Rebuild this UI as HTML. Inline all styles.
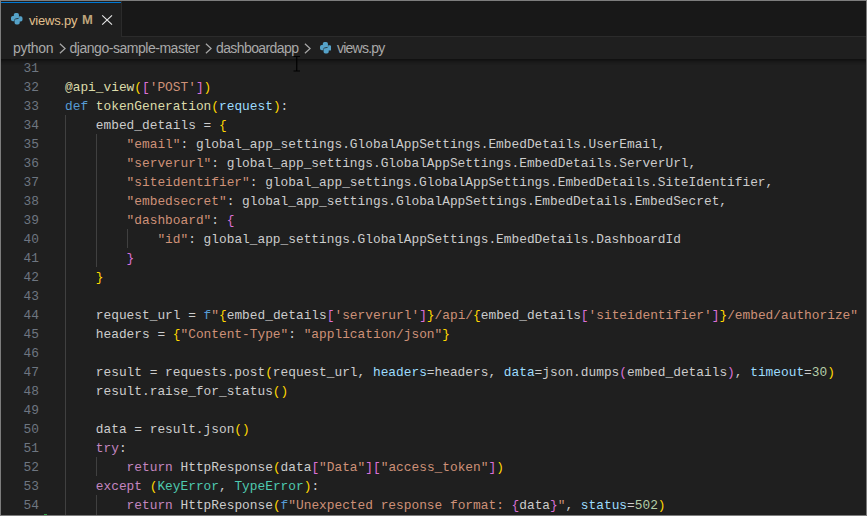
<!DOCTYPE html>
<html><head><meta charset="utf-8">
<style>
*{margin:0;padding:0;box-sizing:border-box}
html,body{width:867px;height:516px;overflow:hidden;background:#7d7d7d}
#win{position:absolute;left:1px;top:1px;width:865px;height:514px;background:#1f1f1f;overflow:hidden}
#tabs{position:absolute;left:0;top:0;width:865px;height:36px;background:#181818}
#tabs .bb{position:absolute;left:120px;top:35px;width:745px;height:1px;background:#2b2b2b}
#tab{position:absolute;left:0;top:0;width:120px;height:36px;background:#1f1f1f}
#tab .top{position:absolute;left:0;top:1px;width:120px;height:1px;background:#0078d4}
#tab .br{position:absolute;left:120px;top:0;width:1px;height:36px;background:#2b2b2b}
.ui{font-family:"Liberation Sans",sans-serif;font-size:13px;white-space:pre}
#tab .name{position:absolute;left:28px;top:12px;color:#e2c08d;letter-spacing:-0.2px}
#tab .m{position:absolute;left:81px;top:11px;color:#bda47b;font-weight:bold;font-size:13px}
#crumbs{position:absolute;left:0;top:36px;width:865px;height:22px;background:#1f1f1f;color:#a9a9a9}
#crumbs span{position:absolute;top:3px;font-size:14px;letter-spacing:-0.42px}
#crumbs svg{position:absolute}
#editor{position:absolute;left:0;top:58px;width:865px;height:456px;background:#1f1f1f}
#shadow{position:absolute;left:0;top:58px;width:865px;height:6px;box-shadow:#000 0 6px 6px -6px inset}
.code{font-family:"Liberation Mono",monospace;font-size:12.83px;line-height:19px;white-space:pre}
#ln{position:absolute;left:0;top:0;width:38px;text-align:right;color:#6e7681}
#src{position:absolute;left:64px;top:0;color:#cccccc}
.g{position:absolute;width:1px;background:#404040}
.k{color:#569cd6}.c{color:#c586c0}.f{color:#dcdcaa}.p{color:#9cdcfe}.s{color:#ce9178}.n{color:#b5cea8}.t{color:#4ec9b0}
.b1{color:#ffd700}.b2{color:#da70d6}
</style></head><body>
<div id="win">
 <div id="tabs">
  <div class="bb"></div>
  <div id="tab">
   <div class="top"></div><div class="br"></div>
   <svg style="position:absolute;left:10.2px;top:12.2px" width="11.5" height="11.5" viewBox="0 0 11.6 11.6"><g fill="#55a2c8"><path d="M4.6,0 H6.3 Q8,0 8,1.7 V5.0 L4.9,5.55 Q3.3,5.8 3.3,7.2 V8.3 H1.8 Q0,8.3 0,6.5 V4.8 Q0,3 1.8,3 H2.8 V1.8 Q2.8,0 4.6,0 Z"/><path transform="rotate(180 5.8 5.8)" d="M4.6,0 H6.3 Q8,0 8,1.7 V5.0 L4.9,5.55 Q3.3,5.8 3.3,7.2 V8.3 H1.8 Q0,8.3 0,6.5 V4.8 Q0,3 1.8,3 H2.8 V1.8 Q2.8,0 4.6,0 Z"/></g></svg>
   <span class="ui name">views.py</span>
   <span class="ui m">M</span>
   <svg style="position:absolute;left:100px;top:13px" width="12" height="12" viewBox="0 0 12 12"><path d="M1.2 1.4L11 10.7M11 1.4L1.2 10.7" stroke="#e6e6e6" stroke-width="1.15"/></svg>
  </div>
 </div>
 <div id="crumbs" class="ui">
  <span style="left:12px;letter-spacing:-0.3px">python</span>
  <svg style="left:58px;top:6px" width="8" height="11" viewBox="0 0 8 11"><path d="M0.9 0.7L6.1 5.5L0.9 10.3" fill="none" stroke="#a9a9a9" stroke-width="1.2"/></svg>
  <span style="left:68.5px;letter-spacing:-0.47px">django-sample-master</span>
  <svg style="left:204px;top:6px" width="8" height="11" viewBox="0 0 8 11"><path d="M0.9 0.7L6.1 5.5L0.9 10.3" fill="none" stroke="#a9a9a9" stroke-width="1.2"/></svg>
  <span style="left:215px;letter-spacing:-0.6px">dashboardapp</span>
  <svg style="left:303px;top:6px" width="8" height="11" viewBox="0 0 8 11"><path d="M0.9 0.7L6.1 5.5L0.9 10.3" fill="none" stroke="#a9a9a9" stroke-width="1.2"/></svg>
  <svg style="left:318.7px;top:5px" width="11.5" height="11.5" viewBox="0 0 11.6 11.6"><g fill="#55a2c8"><path d="M4.6,0 H6.3 Q8,0 8,1.7 V5.0 L4.9,5.55 Q3.3,5.8 3.3,7.2 V8.3 H1.8 Q0,8.3 0,6.5 V4.8 Q0,3 1.8,3 H2.8 V1.8 Q2.8,0 4.6,0 Z"/><path transform="rotate(180 5.8 5.8)" d="M4.6,0 H6.3 Q8,0 8,1.7 V5.0 L4.9,5.55 Q3.3,5.8 3.3,7.2 V8.3 H1.8 Q0,8.3 0,6.5 V4.8 Q0,3 1.8,3 H2.8 V1.8 Q2.8,0 4.6,0 Z"/></g></svg>
  <span style="left:336px;letter-spacing:-0.76px">views.py</span>
 </div>
 <div id="editor">
  <div class="g" style="left:64px;top:56px;height:418px"></div><div class="g" style="left:95px;top:75px;height:133px"></div><div class="g" style="left:126px;top:170px;height:19px"></div><div class="g" style="left:95px;top:398px;height:19px"></div><div class="g" style="left:95px;top:436px;height:38px"></div>
  <div id="ln" class="code">31
32
33
34
35
36
37
38
39
40
41
42
43
44
45
46
47
48
49
50
51
52
53
54
55</div>
  <div id="src" class="code">
<span class="f">@api_view</span><span class="b1">(</span><span class="b2">[</span><span class="s">'POST'</span><span class="b2">]</span><span class="b1">)</span>
<span class="k">def</span> <span class="f">tokenGeneration</span><span class="b1">(</span><span class="p">request</span><span class="b1">)</span>:
    embed_details = <span class="b1">{</span>
        <span class="s">"email"</span>: global_app_settings.GlobalAppSettings.EmbedDetails.UserEmail,
        <span class="s">"serverurl"</span>: global_app_settings.GlobalAppSettings.EmbedDetails.ServerUrl,
        <span class="s">"siteidentifier"</span>: global_app_settings.GlobalAppSettings.EmbedDetails.SiteIdentifier,
        <span class="s">"embedsecret"</span>: global_app_settings.GlobalAppSettings.EmbedDetails.EmbedSecret,
        <span class="s">"dashboard"</span>: <span class="b2">{</span>
            <span class="s">"id"</span>: global_app_settings.GlobalAppSettings.EmbedDetails.DashboardId
        <span class="b2">}</span>
    <span class="b1">}</span>

    request_url = <span class="k">f</span><span class="s">"</span><span class="b1">{</span>embed_details<span class="b2">[</span><span class="s">'serverurl'</span><span class="b2">]</span><span class="b1">}</span><span class="s">/api/</span><span class="b1">{</span>embed_details<span class="b2">[</span><span class="s">'siteidentifier'</span><span class="b2">]</span><span class="b1">}</span><span class="s">/embed/authorize"</span>
    headers = <span class="b1">{</span><span class="s">"Content-Type"</span>: <span class="s">"application/json"</span><span class="b1">}</span>

    result = requests.post<span class="b1">(</span>request_url, <span class="p">headers</span>=headers, <span class="p">data</span>=json.dumps<span class="b2">(</span>embed_details<span class="b2">)</span>, <span class="p">timeout</span>=<span class="n">30</span><span class="b1">)</span>
    result.raise_for_status<span class="b1">()</span>

    data = result.json<span class="b1">()</span>
    <span class="c">try</span>:
        <span class="c">return</span> HttpResponse<span class="b1">(</span>data<span class="b2">[</span><span class="s">"Data"</span><span class="b2">][</span><span class="s">"access_token"</span><span class="b2">]</span><span class="b1">)</span>
    <span class="c">except</span> <span class="b1">(</span><span class="t">KeyError</span>, <span class="t">TypeError</span><span class="b1">)</span>:
        <span class="c">return</span> HttpResponse<span class="b1">(</span><span class="k">f</span><span class="s">"Unexpected response format: </span><span class="b2">{</span>data<span class="b2">}</span><span class="s">"</span>, <span class="p">status</span>=<span class="n">502</span><span class="b1">)</span>
</div>
 </div>
 <div id="shadow"></div>
 <div style="position:absolute;left:43px;top:513px;width:3px;height:1px;background:#2ea043"></div>
 <svg style="position:absolute;left:291px;top:54px" width="9" height="17" viewBox="0 0 9 17"><path d="M1.5 1.5H8M4.75 1.5V16M1.5 16H8" stroke="#000" stroke-width="1.2" fill="none"/></svg>
</div>
</body></html>
